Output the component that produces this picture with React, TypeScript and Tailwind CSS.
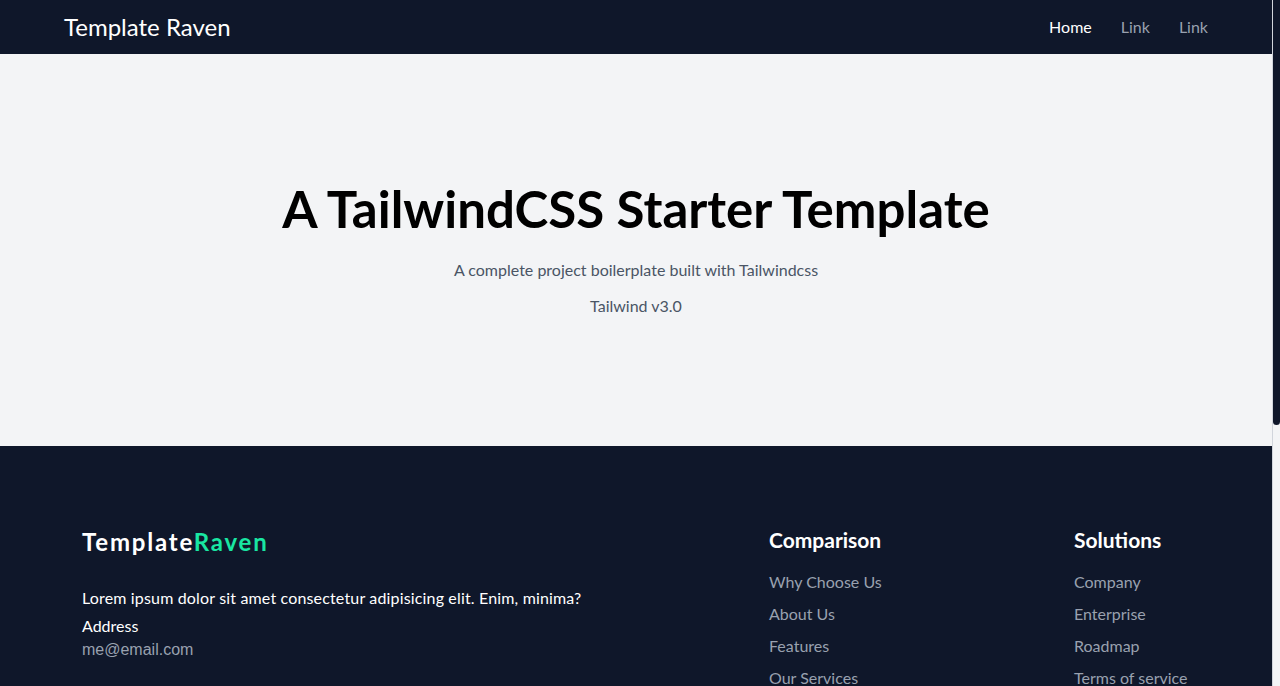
import React from 'react';

const comparison = ['Why Choose Us', 'About Us', 'Features', 'Our Services', 'Pricing'];
const solutions = ['Company', 'Enterprise', 'Roadmap', 'Terms of service', 'Privacy policy'];

const Navbar = () => (
  <nav className="h-[54px] bg-[#0f172a] flex items-center justify-between px-16">
    <a href="#" className="text-2xl text-white">Template Raven</a>
    <ul className="flex items-center gap-[29px] text-base">
      <li><a href="#" className="text-white">Home</a></li>
      <li><a href="#" className="text-gray-400">Link</a></li>
      <li><a href="#" className="text-gray-400">Link</a></li>
    </ul>
  </nav>
);

const Hero = () => (
  <section className="h-[392px] bg-gray-100 flex flex-col items-center justify-center text-center">
    <h1 className="text-[51px] leading-none font-bold text-black">A TailwindCSS Starter Template</h1>
    <p className="mt-[24px] text-base leading-6 text-gray-600">A complete project boilerplate built with Tailwindcss</p>
    <p className="mt-3 text-base leading-6 text-gray-600">Tailwind v3.0</p>
  </section>
);

const LinkColumn = ({ title, links }: { title: string; links: string[] }) => (
  <div>
    <h3 className="text-[21px] leading-7 font-bold text-white">{title}</h3>
    <ul className="mt-[16px] flex flex-col gap-2">
      {links.map((l) => (
        <li key={l}><a href="#" className="text-base leading-6 text-gray-400">{l}</a></li>
      ))}
    </ul>
  </div>
);

const Footer = () => (
  <footer className="min-h-[661px] bg-[#0f172a] px-[82px] pt-20 pb-16">
    <div className="grid grid-cols-[687px_305px_1fr]">
      <div>
        <h2 className="text-2xl leading-8 font-bold tracking-[0.075em] text-white">
          Template<span className="text-[#19e6a2]">Raven</span>
        </h2>
        <p className="mt-[26px] text-base leading-7 tracking-[0.01em] text-white">Lorem ipsum dolor sit amet consectetur adipisicing elit. Enim, minima?</p>
        <p className="text-base leading-7 text-white">Address</p>
        <a href="#" className="block text-base leading-5 text-gray-400 font-['Liberation_Sans',sans-serif]">me@email.com</a>
      </div>
      <LinkColumn title="Comparison" links={comparison} />
      <LinkColumn title="Solutions" links={solutions} />
    </div>
    <div className="mt-32 border-t border-gray-700 pt-6 text-sm text-gray-400">
      © 2022 TemplateRaven. All rights reserved.
    </div>
  </footer>
);

// page scrollbar drawn as a strip so it shows in the screenshot
const Scrollbar = () => (
  <div className="w-2 shrink-0 bg-gray-100 border-l border-gray-300">
    <div className="h-[425px] bg-[#0f172a] rounded-b-full" />
  </div>
);

export default function App() {
  return (
    <div className="h-[686px] flex overflow-hidden font-['Lato',sans-serif]">
      <main className="flex-1 min-w-0">
        <Navbar />
        <Hero />
        <Footer />
      </main>
      <Scrollbar />
    </div>
  );
}
